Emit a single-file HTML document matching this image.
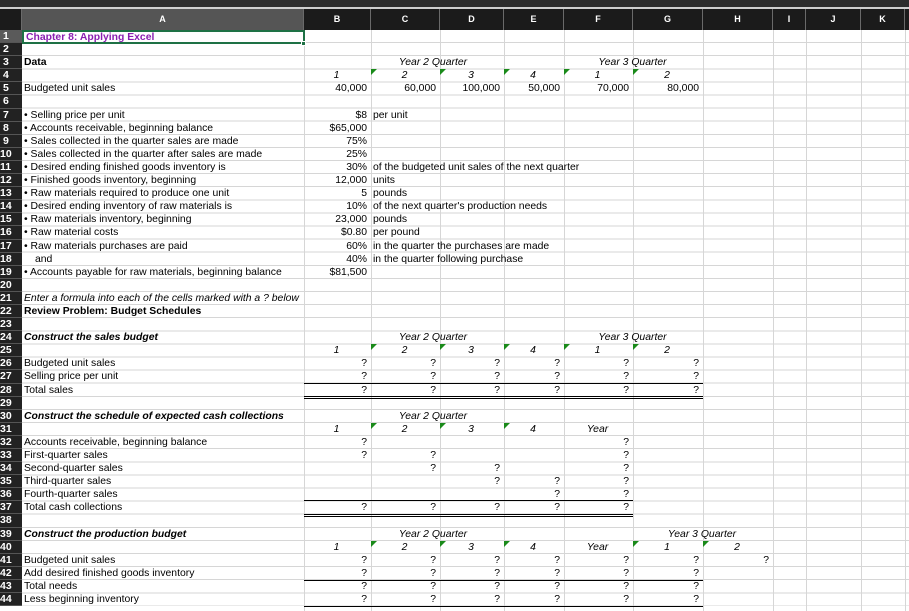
<!DOCTYPE html>
<html><head><meta charset="utf-8"><style>
*{margin:0;padding:0;box-sizing:border-box}
body{width:909px;height:611px;overflow:hidden;background:#fff;font-family:"Liberation Sans",Arial,sans-serif;position:relative}
#top{position:absolute;left:0;top:0;width:909px;height:9px;background:#2d2d2d;border-bottom:2px solid #cfcfcf}
#hdr{position:absolute;left:0;top:9px;height:21px;width:909px;background:#1b1b1b;display:flex}
#hdr div{height:21px;border-right:1px solid #6a6a6a;color:#fff;font-weight:bold;font-size:9px;text-align:center;line-height:21px}
#g{position:absolute;left:0;top:30px;width:909px;display:grid;grid-template-columns:22px 282px 67px 69px 64px 60px 69px 70px 70px 33px 55px 44px 4px;grid-template-rows:repeat(44,13.1px);font-size:10.4px;
background:repeating-linear-gradient(to bottom,transparent 0,transparent 12.1px,#d6d6d6 12.1px,#d6d6d6 13.1px)}
.v{position:absolute;top:30px;width:1px;height:581px;background:#d6d6d6}
.rh{background:#222;color:#fff;font-weight:bold;font-size:10.5px;line-height:13px;padding-left:3px;border-bottom:1px solid #555;grid-column:1}
#g span{line-height:12px;padding-top:1px;white-space:nowrap;overflow:visible;position:relative;padding-left:2px;padding-right:4px}
.r{text-align:right}.c{text-align:center}.i{font-style:italic}.b{font-weight:bold}
.t::before{content:"";position:absolute;left:0;top:0;border-top:6px solid #1a8a1a;border-right:6px solid transparent}
.ln{position:absolute;height:1px;background:#000}
</style></head><body>
<div id="top"></div>
<div id="hdr">
<div style="width:22px;background:#1b1b1b"></div>
<div style="width:282px;background:#555">A</div>
<div style="width:67px">B</div><div style="width:69px">C</div><div style="width:64px">D</div><div style="width:60px">E</div><div style="width:69px">F</div><div style="width:70px">G</div><div style="width:70px">H</div><div style="width:33px">I</div><div style="width:55px">J</div><div style="width:44px">K</div>
</div>
<div class="v" style="left:304px"></div><div class="v" style="left:371px"></div><div class="v" style="left:440px"></div><div class="v" style="left:504px"></div><div class="v" style="left:564px"></div><div class="v" style="left:633px"></div><div class="v" style="left:703px"></div><div class="v" style="left:773px"></div><div class="v" style="left:806px"></div><div class="v" style="left:861px"></div><div class="v" style="left:905px"></div>
<div id="g">
<div class="rh" style="grid-row:1;background:#5a5a5a">1</div><div class="rh" style="grid-row:2">2</div><div class="rh" style="grid-row:3">3</div><div class="rh" style="grid-row:4">4</div><div class="rh" style="grid-row:5">5</div><div class="rh" style="grid-row:6">6</div><div class="rh" style="grid-row:7">7</div><div class="rh" style="grid-row:8">8</div><div class="rh" style="grid-row:9">9</div><div class="rh" style="grid-row:10;padding-left:0">10</div><div class="rh" style="grid-row:11;padding-left:0">11</div><div class="rh" style="grid-row:12;padding-left:0">12</div><div class="rh" style="grid-row:13;padding-left:0">13</div><div class="rh" style="grid-row:14;padding-left:0">14</div><div class="rh" style="grid-row:15;padding-left:0">15</div><div class="rh" style="grid-row:16;padding-left:0">16</div><div class="rh" style="grid-row:17;padding-left:0">17</div><div class="rh" style="grid-row:18;padding-left:0">18</div><div class="rh" style="grid-row:19;padding-left:0">19</div><div class="rh" style="grid-row:20;padding-left:0">20</div><div class="rh" style="grid-row:21;padding-left:0">21</div><div class="rh" style="grid-row:22;padding-left:0">22</div><div class="rh" style="grid-row:23;padding-left:0">23</div><div class="rh" style="grid-row:24;padding-left:0">24</div><div class="rh" style="grid-row:25;padding-left:0">25</div><div class="rh" style="grid-row:26;padding-left:0">26</div><div class="rh" style="grid-row:27;padding-left:0">27</div><div class="rh" style="grid-row:28;padding-left:0">28</div><div class="rh" style="grid-row:29;padding-left:0">29</div><div class="rh" style="grid-row:30;padding-left:0">30</div><div class="rh" style="grid-row:31;padding-left:0">31</div><div class="rh" style="grid-row:32;padding-left:0">32</div><div class="rh" style="grid-row:33;padding-left:0">33</div><div class="rh" style="grid-row:34;padding-left:0">34</div><div class="rh" style="grid-row:35;padding-left:0">35</div><div class="rh" style="grid-row:36;padding-left:0">36</div><div class="rh" style="grid-row:37;padding-left:0">37</div><div class="rh" style="grid-row:38;padding-left:0">38</div><div class="rh" style="grid-row:39;padding-left:0">39</div><div class="rh" style="grid-row:40;padding-left:0">40</div><div class="rh" style="grid-row:41;padding-left:0">41</div><div class="rh" style="grid-row:42;padding-left:0">42</div><div class="rh" style="grid-row:43;padding-left:0">43</div><div class="rh" style="grid-row:44;padding-left:0">44</div>

<span class="b" style="grid-area:1/2;color:#8a1fb0;padding-left:4px;padding-top:2px">Chapter 8: Applying Excel</span>
<span class="b" style="grid-area:3/2">Data</span>
<span class="i c" style="grid-area:3/3/4/7">Year 2 Quarter</span>
<span class="i c" style="grid-area:3/7/4/9">Year 3 Quarter</span>
<span class="i c" style="grid-area:4/3">1</span><span class="i c t" style="grid-area:4/4">2</span><span class="i c t" style="grid-area:4/5">3</span><span class="i c t" style="grid-area:4/6">4</span><span class="i c t" style="grid-area:4/7">1</span><span class="i c t" style="grid-area:4/8">2</span>
<span style="grid-area:5/2">Budgeted unit sales</span>
<span class="r" style="grid-area:5/3">40,000</span><span class="r" style="grid-area:5/4">60,000</span><span class="r" style="grid-area:5/5">100,000</span><span class="r" style="grid-area:5/6">50,000</span><span class="r" style="grid-area:5/7">70,000</span><span class="r" style="grid-area:5/8">80,000</span>
<span style="grid-area:7/2">• Selling price per unit</span><span class="r" style="grid-area:7/3">$8</span><span style="grid-area:7/4">per unit</span>
<span style="grid-area:8/2">• Accounts receivable, beginning balance</span><span class="r" style="grid-area:8/3">$65,000</span>
<span style="grid-area:9/2">• Sales collected in the quarter sales are made</span><span class="r" style="grid-area:9/3">75%</span>
<span style="grid-area:10/2">• Sales collected in the quarter after sales are made</span><span class="r" style="grid-area:10/3">25%</span>
<span style="grid-area:11/2">• Desired ending finished goods inventory is</span><span class="r" style="grid-area:11/3">30%</span><span style="grid-area:11/4">of the budgeted unit sales of the next quarter</span>
<span style="grid-area:12/2">• Finished goods inventory, beginning</span><span class="r" style="grid-area:12/3">12,000</span><span style="grid-area:12/4">units</span>
<span style="grid-area:13/2">• Raw materials required to produce one unit</span><span class="r" style="grid-area:13/3">5</span><span style="grid-area:13/4">pounds</span>
<span style="grid-area:14/2">• Desired ending inventory of raw materials is</span><span class="r" style="grid-area:14/3">10%</span><span style="grid-area:14/4">of the next quarter's production needs</span>
<span style="grid-area:15/2">• Raw materials inventory, beginning</span><span class="r" style="grid-area:15/3">23,000</span><span style="grid-area:15/4">pounds</span>
<span style="grid-area:16/2">• Raw material costs</span><span class="r" style="grid-area:16/3">$0.80</span><span style="grid-area:16/4">per pound</span>
<span style="grid-area:17/2">• Raw materials purchases are paid</span><span class="r" style="grid-area:17/3">60%</span><span style="grid-area:17/4">in the quarter the purchases are made</span>
<span style="grid-area:18/2;padding-left:13px">and</span><span class="r" style="grid-area:18/3">40%</span><span style="grid-area:18/4">in the quarter following purchase</span>
<span style="grid-area:19/2">• Accounts payable for raw materials, beginning balance</span><span class="r" style="grid-area:19/3">$81,500</span>
<span class="i" style="grid-area:21/2">Enter a formula into each of the cells marked with a ? below</span>
<span class="b" style="grid-area:22/2">Review Problem: Budget Schedules</span>

<span class="b i" style="grid-area:24/2">Construct the sales budget</span>
<span class="i c" style="grid-area:24/3/25/7">Year 2 Quarter</span><span class="i c" style="grid-area:24/7/25/9">Year 3 Quarter</span>
<span class="i c" style="grid-area:25/3">1</span><span class="i c t" style="grid-area:25/4">2</span><span class="i c t" style="grid-area:25/5">3</span><span class="i c t" style="grid-area:25/6">4</span><span class="i c t" style="grid-area:25/7">1</span><span class="i c t" style="grid-area:25/8">2</span>
<span style="grid-area:26/2">Budgeted unit sales</span><span style="grid-area:27/2">Selling price per unit</span><span style="grid-area:28/2">Total sales</span>
<span class="r" style="grid-area:26/3">?</span><span class="r" style="grid-area:26/4">?</span><span class="r" style="grid-area:26/5">?</span><span class="r" style="grid-area:26/6">?</span><span class="r" style="grid-area:26/7">?</span><span class="r" style="grid-area:26/8">?</span>
<span class="r" style="grid-area:27/3">?</span><span class="r" style="grid-area:27/4">?</span><span class="r" style="grid-area:27/5">?</span><span class="r" style="grid-area:27/6">?</span><span class="r" style="grid-area:27/7">?</span><span class="r" style="grid-area:27/8">?</span>
<span class="r" style="grid-area:28/3">?</span><span class="r" style="grid-area:28/4">?</span><span class="r" style="grid-area:28/5">?</span><span class="r" style="grid-area:28/6">?</span><span class="r" style="grid-area:28/7">?</span><span class="r" style="grid-area:28/8">?</span>

<span class="b i" style="grid-area:30/2">Construct the schedule of expected cash collections</span>
<span class="i c" style="grid-area:30/3/31/7">Year 2 Quarter</span>
<span class="i c" style="grid-area:31/3">1</span><span class="i c t" style="grid-area:31/4">2</span><span class="i c t" style="grid-area:31/5">3</span><span class="i c t" style="grid-area:31/6">4</span><span class="i c" style="grid-area:31/7">Year</span>
<span style="grid-area:32/2">Accounts receivable, beginning balance</span><span style="grid-area:33/2">First-quarter sales</span><span style="grid-area:34/2">Second-quarter sales</span><span style="grid-area:35/2">Third-quarter sales</span><span style="grid-area:36/2">Fourth-quarter sales</span><span style="grid-area:37/2">Total cash collections</span>
<span class="r" style="grid-area:32/3">?</span><span class="r" style="grid-area:32/7">?</span>
<span class="r" style="grid-area:33/3">?</span><span class="r" style="grid-area:33/4">?</span><span class="r" style="grid-area:33/7">?</span>
<span class="r" style="grid-area:34/4">?</span><span class="r" style="grid-area:34/5">?</span><span class="r" style="grid-area:34/7">?</span>
<span class="r" style="grid-area:35/5">?</span><span class="r" style="grid-area:35/6">?</span><span class="r" style="grid-area:35/7">?</span>
<span class="r" style="grid-area:36/6">?</span><span class="r" style="grid-area:36/7">?</span>
<span class="r" style="grid-area:37/3">?</span><span class="r" style="grid-area:37/4">?</span><span class="r" style="grid-area:37/5">?</span><span class="r" style="grid-area:37/6">?</span><span class="r" style="grid-area:37/7">?</span>

<span class="b i" style="grid-area:39/2">Construct the production budget</span>
<span class="i c" style="grid-area:39/3/40/7">Year 2 Quarter</span><span class="i c" style="grid-area:39/8/40/10">Year 3 Quarter</span>
<span class="i c" style="grid-area:40/3">1</span><span class="i c t" style="grid-area:40/4">2</span><span class="i c t" style="grid-area:40/5">3</span><span class="i c t" style="grid-area:40/6">4</span><span class="i c" style="grid-area:40/7">Year</span><span class="i c t" style="grid-area:40/8">1</span><span class="i c t" style="grid-area:40/9">2</span>
<span style="grid-area:41/2">Budgeted unit sales</span><span style="grid-area:42/2">Add desired finished goods inventory</span><span style="grid-area:43/2">Total needs</span><span style="grid-area:44/2">Less beginning inventory</span>
<span class="r" style="grid-area:41/3">?</span><span class="r" style="grid-area:41/4">?</span><span class="r" style="grid-area:41/5">?</span><span class="r" style="grid-area:41/6">?</span><span class="r" style="grid-area:41/7">?</span><span class="r" style="grid-area:41/8">?</span><span class="r" style="grid-area:41/9">?</span>
<span class="r" style="grid-area:42/3">?</span><span class="r" style="grid-area:42/4">?</span><span class="r" style="grid-area:42/5">?</span><span class="r" style="grid-area:42/6">?</span><span class="r" style="grid-area:42/7">?</span><span class="r" style="grid-area:42/8">?</span>
<span class="r" style="grid-area:43/3">?</span><span class="r" style="grid-area:43/4">?</span><span class="r" style="grid-area:43/5">?</span><span class="r" style="grid-area:43/6">?</span><span class="r" style="grid-area:43/7">?</span><span class="r" style="grid-area:43/8">?</span>
<span class="r" style="grid-area:44/3">?</span><span class="r" style="grid-area:44/4">?</span><span class="r" style="grid-area:44/5">?</span><span class="r" style="grid-area:44/6">?</span><span class="r" style="grid-area:44/7">?</span><span class="r" style="grid-area:44/8">?</span>
</div>
<div style="position:absolute;left:22px;top:30px;width:283px;height:14px;border:2px solid #1e7145"></div>
<div style="position:absolute;left:301px;top:41px;width:5px;height:5px;background:#1e7145;border:1px solid #fff"></div>
<div class="ln" style="left:304px;width:399px;top:383px"></div>
<div class="ln" style="left:304px;width:399px;top:396px"></div><div class="ln" style="left:304px;width:399px;top:398px"></div>
<div class="ln" style="left:304px;width:329px;top:500px"></div>
<div class="ln" style="left:304px;width:329px;top:514px"></div><div class="ln" style="left:304px;width:329px;top:516px"></div>
<div class="ln" style="left:304px;width:399px;top:580px"></div>
<div class="ln" style="left:304px;width:399px;top:606px"></div>
</body></html>
